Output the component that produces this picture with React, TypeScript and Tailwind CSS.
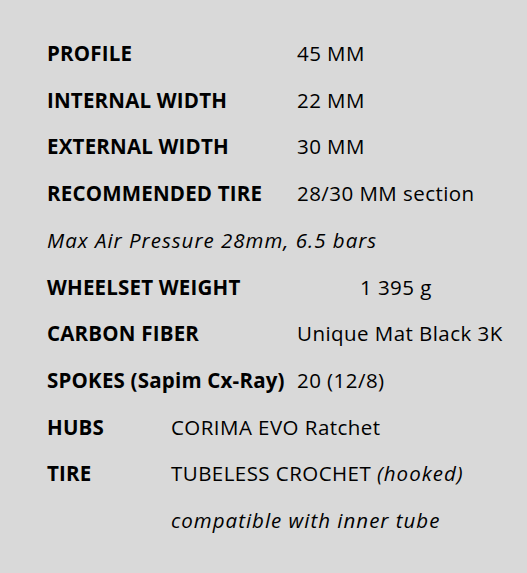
import React from "react";

const F = { fontFamily: "'Open Sans', Lato, sans-serif" };

function Row({ label, value, valueClass = "pl-[250px]" }: { label?: React.ReactNode; value?: React.ReactNode; valueClass?: string }) {
  return (
    <div className="relative flex h-[46.7px] items-center">
      {label && <div className="absolute left-0 font-bold tracking-[0.2px] whitespace-nowrap">{label}</div>}
      <div className={"whitespace-nowrap tracking-[0.45px] " + valueClass}>{value}</div>
    </div>
  );
}

const It = ({ children }: { children: React.ReactNode }) => <i className="tracking-[1px]">{children}</i>;

export default function App() {
  return (
    <div className="min-h-[573px] w-[527px] bg-[#d9d9d9] text-black text-[20.5px] leading-none" style={F}>
      <div className="pl-[47px] pt-[30px]">
        <Row label="PROFILE" value="45 MM" />
        <Row label="INTERNAL WIDTH" value="22 MM" />
        <Row label="EXTERNAL WIDTH" value="30 MM" />
        <Row label="RECOMMENDED TIRE" value="28/30 MM section" />
        <Row value={<It>Max Air Pressure 28mm, 6.5 bars</It>} valueClass="" />
        <Row label="WHEELSET WEIGHT" value="1 395 g" valueClass="pl-[313px]" />
        <Row label="CARBON FIBER" value="Unique Mat Black 3K" />
        <Row label="SPOKES (Sapim Cx-Ray)" value="20 (12/8)" />
        <Row label="HUBS" value="CORIMA EVO Ratchet" valueClass="pl-[124px]" />
        <Row label="TIRE" value={<>TUBELESS CROCHET <It>(hooked)</It></>} valueClass="pl-[124px]" />
        <Row value={<It>compatible with inner tube</It>} valueClass="pl-[124px]" />
      </div>
    </div>
  );
}
